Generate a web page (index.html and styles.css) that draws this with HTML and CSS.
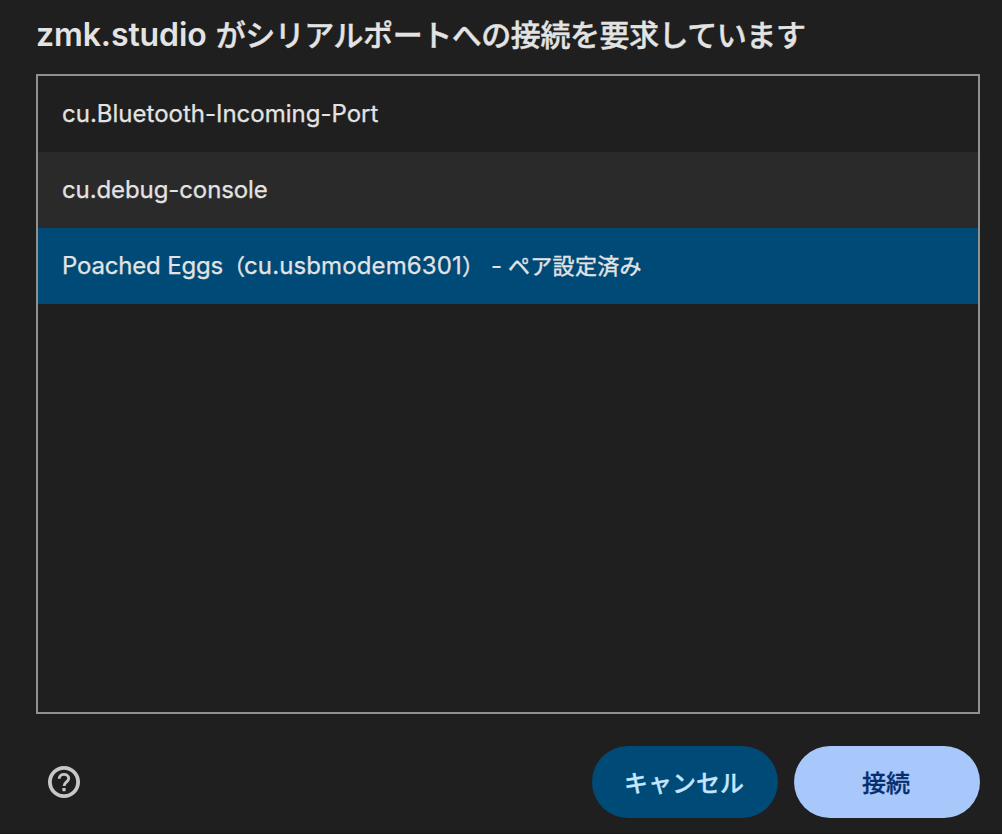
FILE: index.html
```html
<!DOCTYPE html>
<html lang="ja">
<head>
<meta charset="utf-8">
<title>zmk.studio</title>
<link rel="stylesheet" href="styles.css">
</head>
<body>
<main class="dialog">
  <h1 class="title"><span class="title-host">zmk.studio</span><span class="title-text">がシリアルポートへの接続を要求しています</span></h1>
  <ul class="ports">
    <li class="port port-bluetooth">cu.Bluetooth-Incoming-Port</li>
    <li class="port port-alt">cu.debug-console</li>
    <li class="port port-selected"><span class="device">Poached Eggs</span><span class="paren paren-open">（</span><span class="path">cu.usbmodem6301</span><span class="paren paren-close">）</span><span class="dash">-</span><span class="status">ペア設定済み</span></li>
  </ul>
  <footer class="footer">
    <svg class="help" viewBox="0 0 32 32" aria-label="ヘルプ">
      <circle cx="16" cy="16" r="14.1" fill="none" stroke="currentColor" stroke-width="3.8"/>
      <path d="M11.2 12.8C11.2 10 13.4 8.4 16 8.4s4.7 1.7 4.7 4.1c0 3.2-4.6 3.6-4.6 7.5" fill="none" stroke="currentColor" stroke-width="2.9"/>
      <rect x="14.4" y="22" width="3.2" height="3.2" fill="currentColor"/>
    </svg>
    <button class="button cancel">キャンセル</button>
    <button class="button connect">接続</button>
  </footer>
</main>
</body>
</html>
```
FILE: styles.css
```css
* { box-sizing: border-box; }
body {
  margin: 0;
  background: #1f1f1f;
  color: #e3e3e3;
  font-family: Inter, "Noto Sans CJK JP", sans-serif;
}
.dialog {
  display: flex;
  flex-direction: column;
  height: 834px;
  padding: 0 22px 15px 36px;
  border-bottom: 1px solid #191919;
}
.title {
  display: flex;
  align-items: center;
  gap: 9px;
  height: 74px;
  margin: 0;
  padding-bottom: 6px;
  white-space: nowrap;
  font-weight: 600;
}
.title-host {
  font-size: 32px;
  letter-spacing: -0.1px;
}
.title-text {
  padding-bottom: 2px;
  font: 500 30px "Noto Sans CJK JP", sans-serif;
  letter-spacing: -0.45px;
  -webkit-text-stroke: 0.4px currentColor;
}
.ports {
  height: 640px;
  margin: 0;
  padding: 0;
  list-style: none;
  border: 2px solid #8e918f;
}
.port {
  display: flex;
  align-items: center;
  height: 76px;
  padding: 0 0 2px 24px;
  font-size: 24px;
  white-space: pre;
  -webkit-text-stroke: 0.25px currentColor;
}
.port-alt {
  background: #2a2a2a;
  letter-spacing: -0.1px;
}
.port-selected { background: #004a77; }
.device { letter-spacing: -0.18px; }
.path {
  margin-left: -1px;
  letter-spacing: 0.12px;
}
.paren, .status {
  padding-bottom: 3px;
  font-family: "Noto Sans CJK JP", sans-serif;
  font-size: 22px;
  -webkit-text-stroke: 0.4px currentColor;
}
.status { letter-spacing: 0.3px; }
.dash { margin: 0 6px 0 7px; }
.footer {
  display: flex;
  align-items: center;
  gap: 16px;
  height: 72px;
  margin-top: 32px;
}
.help {
  width: 32px;
  height: 32px;
  margin: 0 auto 0 12px;
  color: #c7c7c7;
}
.button {
  width: 186px;
  height: 72px;
  padding: 0 2px 2px 0;
  border: 0;
  border-radius: 36px;
  font: 500 24px "Noto Sans CJK JP", sans-serif;
  -webkit-text-stroke: 0.3px currentColor;
}
.cancel { background: #004a77; color: #c2e7ff; }
.connect { background: #a8c7fa; color: #062e6f; }
```
